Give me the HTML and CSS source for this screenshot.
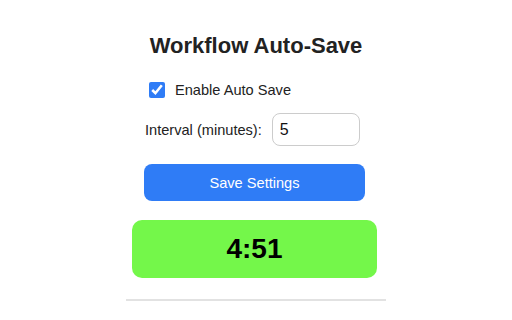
FILE: index.html
```html
<!DOCTYPE html>
<html>
<head>
<meta charset="utf-8">
<link rel="stylesheet" href="styles.css">
</head>
<body>
<div class="popup">
  <h1 class="title">Workflow Auto-Save</h1>
  <label class="check-row">
    <input type="checkbox" class="check" checked>
    <span>Enable Auto Save</span>
  </label>
  <div class="interval-row">
    <label class="interval-label" for="interval">Interval (minutes):</label>
    <input id="interval" class="interval-input" type="number" value="5">
  </div>
  <button class="save-btn">Save Settings</button>
  <div class="timer">4:51</div>
  <div class="divider"></div>
</div>
</body>
</html>
```
FILE: styles.css
```css
html, body {
  margin: 0;
  padding: 0;
  background: #ffffff;
}
body {
  font-family: "Liberation Sans", Arial, sans-serif;
  color: #222;
}
.popup {
  width: 260px;
  margin: 0 auto;
  padding-top: 33px;
  display: flex;
  flex-direction: column;
}
.title {
  margin: 0;
  font-size: 22px;
  line-height: 26px;
  font-weight: bold;
  text-align: center;
  color: #222;
}
.check-row {
  display: flex;
  align-items: center;
  margin-top: 21px;
  padding-left: 23px;
  font-size: 14.6px;
  height: 20px;
}
.check {
  width: 16px;
  height: 16px;
  margin: 0 10px 0 0;
  accent-color: #2f7cf6;
}
.interval-row {
  display: flex;
  align-items: center;
  margin-top: 13px;
  padding-left: 19px;
  font-size: 14.6px;
}
.interval-label {
  margin-right: 10px;
}
.interval-input {
  box-sizing: border-box;
  width: 88px;
  height: 33px;
  border: 1px solid #cccccc;
  border-radius: 8px;
  padding: 0 7px;
  font-family: "Liberation Sans", Arial, sans-serif;
  font-size: 16px;
  color: #111;
  outline: none;
  -moz-appearance: textfield;
}
.interval-input::-webkit-inner-spin-button,
.interval-input::-webkit-outer-spin-button {
  -webkit-appearance: none;
  margin: 0;
}
.save-btn {
  align-self: flex-start;
  margin-top: 18px;
  margin-left: 18px;
  width: 221px;
  height: 37px;
  border: none;
  border-radius: 8px;
  background: #2f7cf6;
  color: #ffffff;
  font-family: "Liberation Sans", Arial, sans-serif;
  font-size: 14.6px;
}
.timer {
  margin-top: 19px;
  margin-left: 6px;
  width: 245px;
  height: 58px;
  border-radius: 10px;
  background: #74f74a;
  color: #000;
  font-size: 28px;
  font-weight: bold;
  display: flex;
  align-items: center;
  justify-content: center;
}
.divider {
  margin-top: 21px;
  height: 2px;
  background: #e2e2e2;
}
```
